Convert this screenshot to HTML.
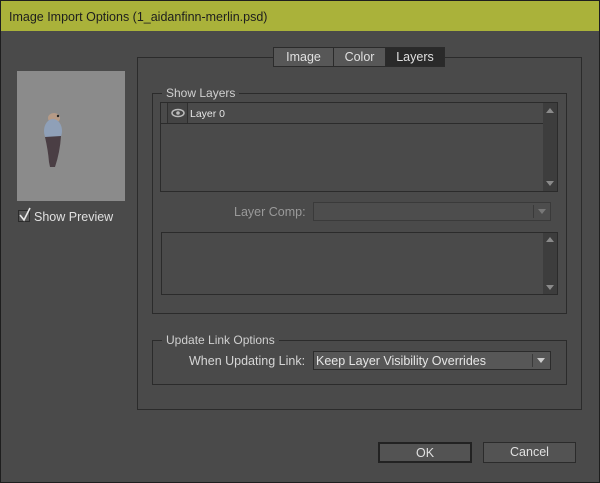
<!DOCTYPE html>
<html><head><style>
*{margin:0;padding:0;box-sizing:border-box}
body{width:600px;height:483px;background:#4a4a4a;font-family:"Liberation Sans",sans-serif;position:relative;overflow:hidden;color:#d6d6d6}
.a{position:absolute}
.win{left:0;top:0;width:600px;height:483px;border:1px solid #1e1e1e}
.title{left:1px;top:1px;width:598px;height:30px;background:#aab23a;color:#1e1e1e;font-size:12.5px;padding:9px 0 0 8px}
.box{border:1px solid #2b2b2b}
.lbl{background:#4a4a4a;padding:0 4px;font-size:12px;color:#d0d0d0}
.tab{top:47px;height:20px;font-size:12.5px;text-align:center;line-height:19px;border:1px solid #2b2b2b;background:#575757;color:#e0e0e0}
.sb{background:#3d3d3d;width:14px}
.arr{width:14px;height:10px}
.btn{height:21px;background:#535353;font-size:12.5px;text-align:center;line-height:18px;color:#e0e0e0}
</style></head><body>
<div class="a win"></div>
<div class="a title">Image Import Options (1_aidanfinn-merlin.psd)</div>

<div class="a" style="left:17px;top:71px;width:108px;height:130px;background:#8b8b8b"></div>
<svg class="a" style="left:38px;top:110px" width="30" height="62" viewBox="0 0 30 62">
<ellipse cx="16" cy="8" rx="6" ry="5" fill="#b59a86"/>
<circle cx="20" cy="6" r="1.2" fill="#222"/>
<ellipse cx="15" cy="21" rx="9" ry="12" fill="#8fa0b8"/>
<path d="M7 27 Q10 40 11 52 L12 57 L17 57 Q22 42 23 26 Z" fill="#4a3e44"/>
</svg>
<div class="a" style="left:18px;top:210px;width:12px;height:12px;border:1px solid #2b2b2b;background:#555"></div>
<svg class="a" style="left:18px;top:206px" width="14" height="16"><path d="M2 9 L6 14 L12 2" fill="none" stroke="#e8e8e8" stroke-width="1.6"/></svg>
<div class="a" style="left:34px;top:210px;font-size:12.5px;color:#e0e0e0">Show Preview</div>

<div class="a box" style="left:137px;top:57px;width:445px;height:353px"></div>
<div class="a tab" style="left:273px;width:61px">Image</div>
<div class="a tab" style="left:333px;width:53px">Color</div>
<div class="a tab" style="left:385px;width:60px;background:#2a2a2a">Layers</div>

<div class="a box" style="left:152px;top:93px;width:415px;height:221px"></div>
<div class="a lbl" style="left:162px;top:86px">Show Layers</div>
<div class="a box" style="left:160px;top:102px;width:398px;height:90px"></div>
<div class="a" style="left:161px;top:123px;width:382px;height:1px;background:#2b2b2b"></div>
<div class="a" style="left:167px;top:103px;width:21px;height:20px;border-left:1px solid #2f2f2f;border-right:1px solid #2f2f2f;background:#444"></div>
<svg class="a" style="left:171px;top:108px" width="14" height="10"><ellipse cx="7" cy="5" rx="6" ry="3.5" fill="none" stroke="#bbb" stroke-width="1.5"/><circle cx="7" cy="5" r="1.8" fill="#bbb"/></svg>
<div class="a" style="left:190px;top:108px;font-size:10.5px;color:#e6e6e6">Layer 0</div>
<div class="a sb" style="left:543px;top:103px;height:88px"></div>
<svg class="a arr" style="left:543px;top:106px"><path d="M3 7 L7 2 L11 7Z" fill="#8a8a8a"/></svg>
<svg class="a arr" style="left:543px;top:178px"><path d="M3 3 L7 8 L11 3Z" fill="#8a8a8a"/></svg>

<div class="a" style="left:234px;top:205px;font-size:12.5px;color:#9a9a9a">Layer Comp:</div>
<div class="a" style="left:313px;top:202px;width:238px;height:19px;border:1px solid #3a3a3a;background:#4d4d4d"></div>
<div class="a" style="left:533px;top:205px;width:1px;height:13px;background:#3a3a3a"></div>
<svg class="a arr" style="left:535px;top:207px"><path d="M3 2 L7 7 L11 2Z" fill="#777"/></svg>

<div class="a box" style="left:161px;top:232px;width:397px;height:63px"></div>
<div class="a sb" style="left:543px;top:233px;height:61px"></div>
<svg class="a arr" style="left:543px;top:235px"><path d="M3 7 L7 2 L11 7Z" fill="#8a8a8a"/></svg>
<svg class="a arr" style="left:543px;top:282px"><path d="M3 3 L7 8 L11 3Z" fill="#8a8a8a"/></svg>

<div class="a box" style="left:152px;top:340px;width:415px;height:45px"></div>
<div class="a lbl" style="left:162px;top:333px">Update Link Options</div>
<div class="a" style="left:189px;top:354px;font-size:12.5px;color:#d6d6d6">When Updating Link:</div>
<div class="a" style="left:313px;top:351px;width:238px;height:19px;border:1px solid #2b2b2b;background:#575757"></div>
<div class="a" style="left:316px;top:354px;font-size:12.5px;color:#e6e6e6">Keep Layer Visibility Overrides</div>
<div class="a" style="left:532px;top:354px;width:1px;height:13px;background:#3a3a3a"></div>
<svg class="a arr" style="left:534px;top:356px"><path d="M3 2 L7 7 L11 2Z" fill="#ccc"/></svg>

<div class="a btn" style="left:378px;top:442px;width:94px;border:2px solid #222">OK</div>
<div class="a btn" style="left:483px;top:442px;width:93px;border:1px solid #2b2b2b;line-height:19px">Cancel</div>
</body></html>
